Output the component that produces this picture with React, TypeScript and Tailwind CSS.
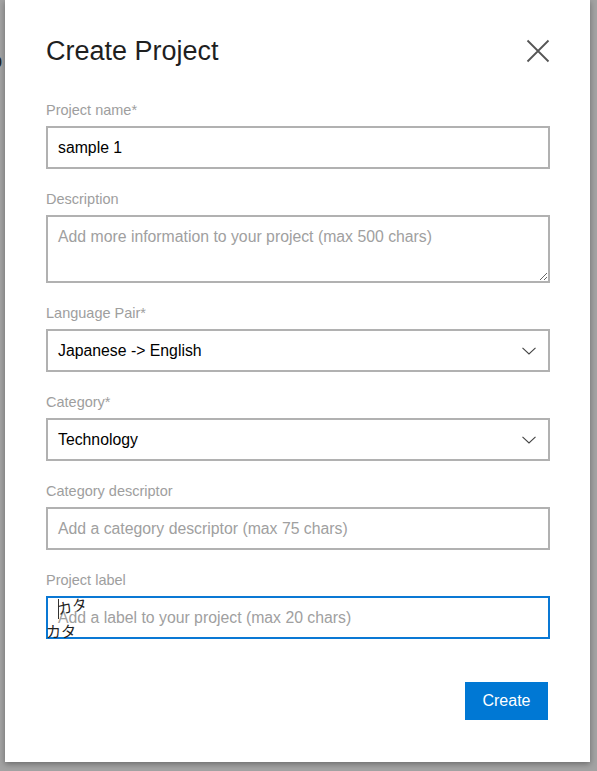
import React from "react";

const font = { fontFamily: '"Liberation Sans", Arial, "Noto Sans CJK JP", sans-serif' };

function Chevron() {
  return (
    <svg width="14" height="8" viewBox="0 0 14 8" className="shrink-0">
      <path d="M0.5 0.8 L7 7 L13.5 0.8" fill="none" stroke="#444" strokeWidth="1.1" />
    </svg>
  );
}

function Label({ children }: { children: React.ReactNode }) {
  return <div className="h-5 leading-5 text-[14.5px] text-[#9e9e9e] mb-[6px]">{children}</div>;
}

function TextField({ value, placeholder, focused }: { value?: string; placeholder?: string; focused?: boolean }) {
  return (
    <div
      className={
        "h-[43px] flex items-center px-[10px] border-2 text-[15.8px] " +
        (focused ? "border-[#0a78d4]" : "border-[#b1b1b1]")
      }
    >
      {value ? <span className="text-black">{value}</span> : <span className="text-[#a0a0a0]">{placeholder}</span>}
    </div>
  );
}

function SelectField({ value }: { value: string }) {
  return (
    <div className="h-[43px] flex items-center justify-between pl-[10px] pr-[12px] border-2 border-[#b1b1b1] text-[15.8px] text-black">
      <span>{value}</span>
      <Chevron />
    </div>
  );
}

export default function App() {
  return (
    <div className="w-[597px] h-[771px] bg-[#a3a3a3] flex overflow-hidden" style={font}>
      {/* page text peeking out at the left edge behind the overlay */}
      <div className="w-[5px] shrink-0 overflow-hidden relative">
        <span className="absolute left-[-10px] top-[44px] text-[22px] text-[#222]">o</span>
      </div>

      <div className="w-[585px] h-[762px] shrink-0 bg-white shadow-[0_2px_6px_rgba(0,0,0,0.35)] pt-[33px] pl-[41px] pr-[40px]">
        <div className="h-9 flex items-center justify-between">
          <h1 className="text-[27px] leading-9 text-[#1f1f1f]">Create Project</h1>
          <svg width="24" height="24" viewBox="0 0 24 24">
            <path d="M1.5 1.5 L22.5 22.5 M22.5 1.5 L1.5 22.5" stroke="#555" strokeWidth="1.8" fill="none" />
          </svg>
        </div>

        <div className="mt-[31px]">
          <Label>Project name*</Label>
          <TextField value="sample 1" />
        </div>

        <div className="mt-[20px]">
          <Label>Description</Label>
          <textarea
            className="block w-full h-[68px] border-2 border-[#b1b1b1] px-[10px] py-[10px] text-[15.8px] leading-[19px] placeholder:text-[#a0a0a0] outline-none"
            placeholder="Add more information to your project (max 500 chars)"
          />
        </div>

        <div className="mt-[20px]">
          <Label>Language Pair*</Label>
          <SelectField value="Japanese -> English" />
        </div>

        <div className="mt-[20px]">
          <Label>Category*</Label>
          <SelectField value="Technology" />
        </div>

        <div className="mt-[20px]">
          <Label>Category descriptor</Label>
          <TextField placeholder="Add a category descriptor (max 75 chars)" />
        </div>

        <div className="mt-[20px]">
          <Label>Project label</Label>
          <div className="relative">
            <TextField placeholder="Add a label to your project (max 20 chars)" focused />
            {/* IME composition remnants */}
            <span className="absolute left-[12px] top-[3px] w-px h-[20px] bg-[#333]" />
            <span className="absolute left-[11px] top-[3px] text-[15px] leading-none text-[#222] -rotate-12">カタ</span>
            <span className="absolute left-0 top-[28px] text-[15px] leading-none text-[#222]">カタ</span>
          </div>
        </div>

        <div className="mt-[43px] flex justify-end pr-[2px]">
          <button className="w-[83px] h-[38px] bg-[#0078d4] text-white text-[16px]">Create</button>
        </div>
      </div>
    </div>
  );
}
